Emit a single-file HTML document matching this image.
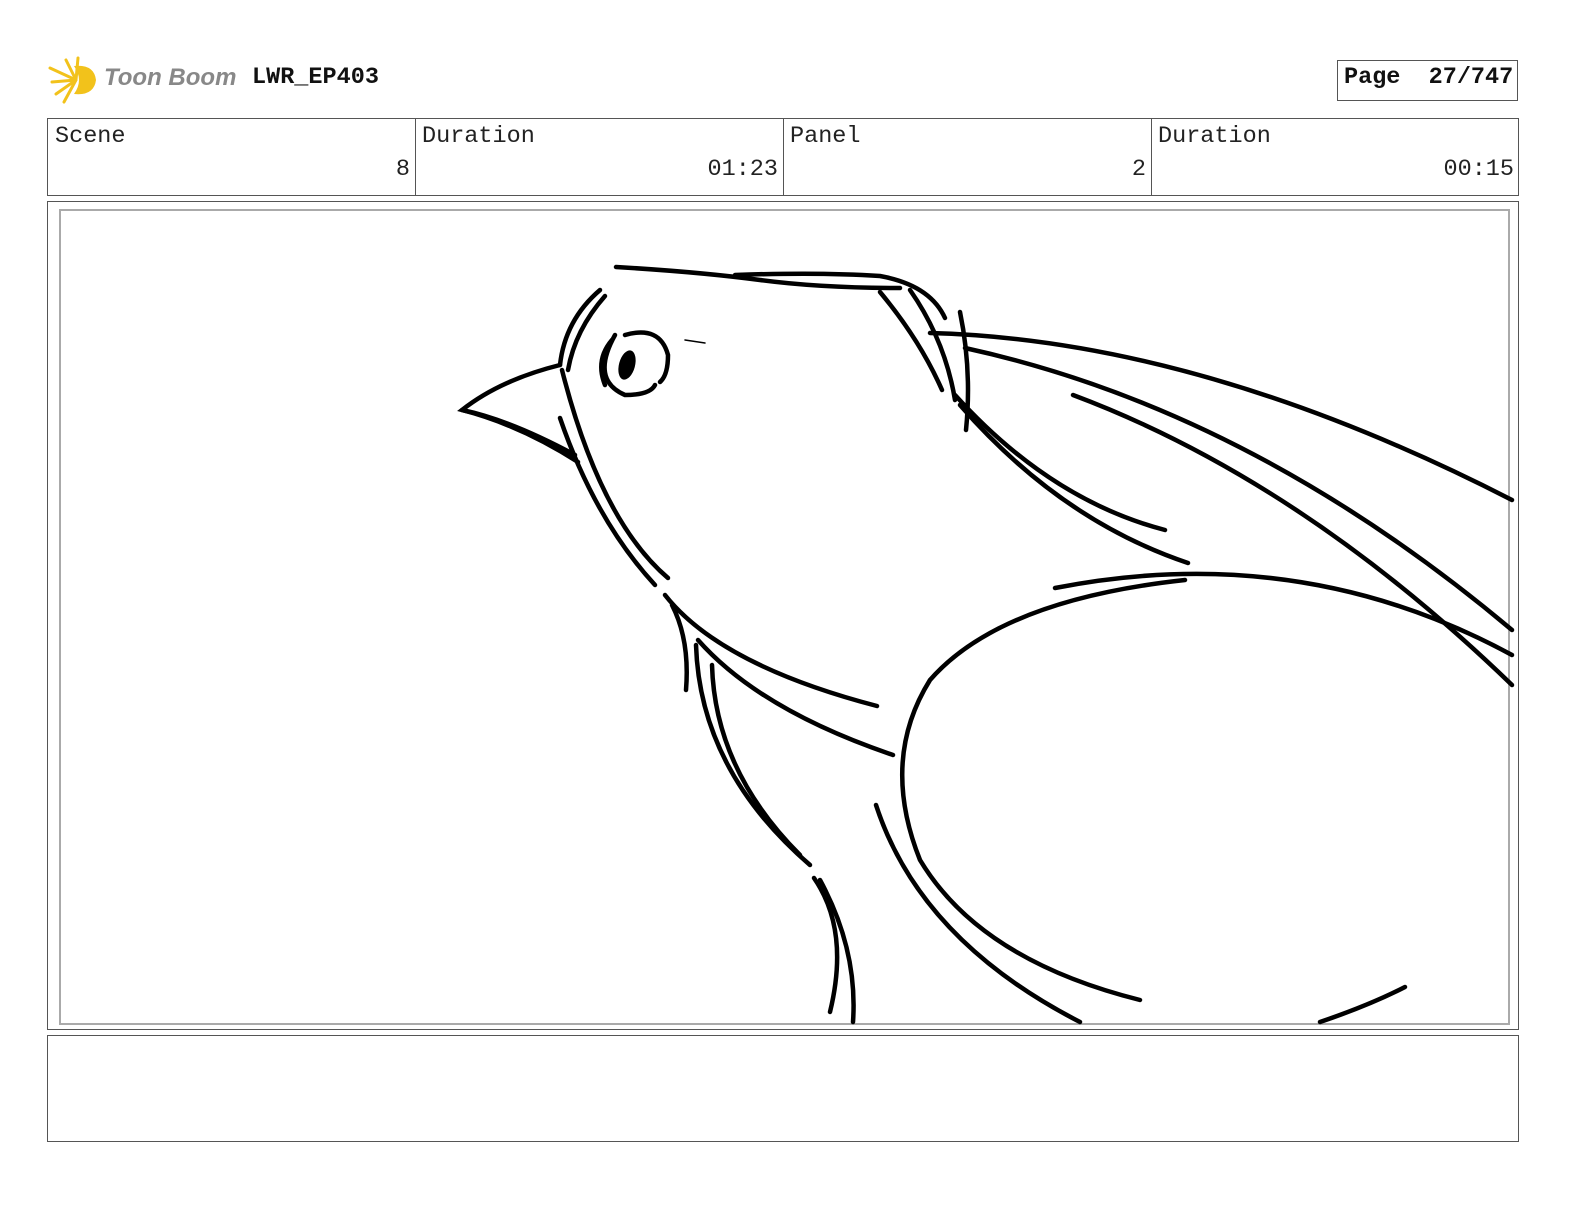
<!DOCTYPE html>
<html><head><meta charset="utf-8"><style>
body{margin:0;background:#fff;width:1584px;height:1224px;position:relative;overflow:hidden;font-family:"Liberation Mono",monospace;}
.a{position:absolute;}
.box{position:absolute;border:1px solid #555;box-sizing:border-box;}
.lbl{position:absolute;font-size:23.5px;color:#222;}
</style></head><body>
<svg class="a" style="left:48px;top:54px" width="56" height="52" viewBox="0 0 56 52">
<g stroke="#f2c21b" stroke-width="3" stroke-linecap="round" fill="none">
<path d="M28 26 L2 14 M28 26 L4 28 M28 26 L8 40 M28 26 L18 6 M28 26 L16 48 M28 26 L30 4"/>
</g>
<path d="M26 12 Q46 10 48 26 Q46 42 26 40 Q36 26 26 12Z" fill="#f2c21b"/>
</svg>
<div class="a" style="left:104px;top:64px;font-family:'Liberation Sans',sans-serif;font-style:italic;font-weight:bold;font-size:24px;color:#888;">Toon Boom</div>
<div class="a" style="left:252px;top:64px;font-weight:bold;font-size:23.5px;color:#111;">LWR_EP403</div>
<div class="box" style="left:1337px;top:60px;width:181px;height:41px;"></div>
<div class="a" style="left:1344px;top:64px;font-weight:bold;font-size:23.5px;color:#111;white-space:pre">Page  27/747</div>

<div class="box" style="left:47px;top:118px;width:1472px;height:78px;"></div>
<div class="a" style="left:415px;top:118px;width:1px;height:78px;background:#555"></div>
<div class="a" style="left:783px;top:118px;width:1px;height:78px;background:#555"></div>
<div class="a" style="left:1151px;top:118px;width:1px;height:78px;background:#555"></div>
<div class="lbl" style="left:55px;top:123px">Scene</div>
<div class="lbl" style="left:422px;top:123px">Duration</div>
<div class="lbl" style="left:790px;top:123px">Panel</div>
<div class="lbl" style="left:1158px;top:123px">Duration</div>
<div class="lbl" style="right:1174px;top:156px">8</div>
<div class="lbl" style="right:806px;top:156px">01:23</div>
<div class="lbl" style="right:438px;top:156px">2</div>
<div class="lbl" style="right:70px;top:156px">00:15</div>

<div class="box" style="left:47px;top:201px;width:1472px;height:829px;"></div>
<div class="a" style="left:59px;top:209px;width:1447px;height:812px;border:2px solid #aaa;"></div>
<div class="box" style="left:47px;top:1035px;width:1472px;height:107px;"></div>

<svg class="a" style="left:0;top:0" width="1584" height="1224">
<g fill="none" stroke="#000" stroke-width="4.5" stroke-linecap="round">
<path d="M616 267 Q700 272 760 280 Q820 288 900 288"/>
<path d="M735 275 Q820 272 880 276 Q930 285 945 318"/>
<path d="M880 292 Q920 340 942 390"/>
<path d="M910 290 Q945 340 955 400"/>
<path d="M960 312 Q972 370 966 430"/>
<path d="M600 290 Q565 320 560 365"/>
<path d="M605 296 Q575 330 568 370"/>
<path d="M560 365 Q500 380 462 410 Q520 425 578 462"/>
<path d="M462 410 Q510 420 575 455"/>
<path d="M562 370 Q600 520 668 578"/>
<path d="M560 418 Q595 520 655 585"/>
<path d="M665 595 Q720 665 877 706"/>
<path d="M672 605 Q690 640 686 690"/>
<path d="M698 640 Q760 710 893 755"/>
<path d="M696 645 Q700 770 810 865"/>
<path d="M712 665 Q715 770 800 855"/>
<path d="M814 878 Q850 930 830 1012"/>
<path d="M820 880 Q858 950 853 1022"/>
<path d="M930 333 Q1200 340 1512 500"/>
<path d="M965 348 Q1250 410 1512 630"/>
<path d="M955 395 Q1050 500 1165 530"/>
<path d="M960 405 Q1060 520 1188 563"/>
<path d="M1073 395 Q1300 480 1512 685"/>
<path d="M1055 588 Q1300 540 1512 655"/>
<path d="M1185 580 Q1000 600 930 680 Q880 760 920 860 Q980 960 1140 1000"/>
<path d="M876 805 Q920 940 1080 1022"/>
<path d="M1320 1022 Q1370 1005 1405 987"/>
<path d="M685 340 L705 343" stroke-width="1.5"/>
<path d="M615 335 Q590 380 625 395 Q650 395 655 385"/>
<path d="M625 335 Q660 325 668 355 Q668 375 660 382"/>
<path d="M612 340 Q595 360 605 385"/>
</g>
<ellipse cx="627" cy="365" rx="8" ry="15" transform="rotate(15 627 365)" fill="#000"/>
</svg>
</body></html>
